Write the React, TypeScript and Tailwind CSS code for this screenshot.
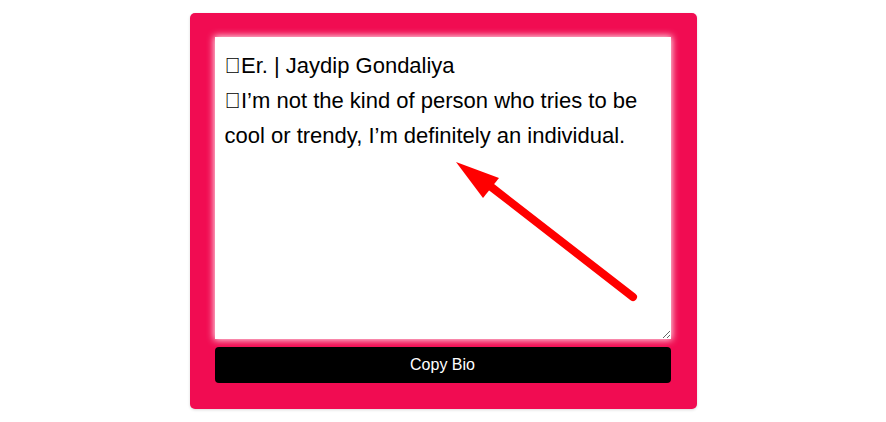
import React from "react";

export default function App() {
  const bio =
    "\uE000Er. | Jaydip Gondaliya\n\uE001I\u2019m not the kind of person who tries to be cool or trendy, I\u2019m definitely an individual.";
  return (
    <div className="w-[886px] h-[422px] bg-white flex justify-center pt-[13px]" style={{ fontFamily: '"Liberation Sans", Arial, sans-serif' }}>
      <div className="relative w-[507px] h-[396px] bg-[#f10c52] rounded-[5px] shadow-[0_1px_3px_rgba(0,0,0,0.15)] px-[25px] pt-[24px] flex flex-col gap-[8px]">
        <textarea
          defaultValue={bio}
          className="w-[456px] h-[302px] bg-white text-black text-[22px] leading-[35px] px-[10px] pt-[11px] pb-[5px] outline-none shadow-[0_0_7px_1px_rgba(255,255,255,0.9)] resize"
          style={{ fontFamily: '"Liberation Sans", Arial, sans-serif' }}
        />
        <button className="w-[456px] h-[36px] bg-black text-white text-[16px] rounded-[4px]">
          Copy Bio
        </button>
        <svg className="absolute left-0 top-0 pointer-events-none" width="507" height="396" viewBox="190 13 507 396">
          <line x1="633" y1="297" x2="490" y2="186" stroke="#ff0000" strokeWidth="8" strokeLinecap="round" />
          <polygon points="456,162 499,178 483,198" fill="#ff0000" />
        </svg>
      </div>
    </div>
  );
}
